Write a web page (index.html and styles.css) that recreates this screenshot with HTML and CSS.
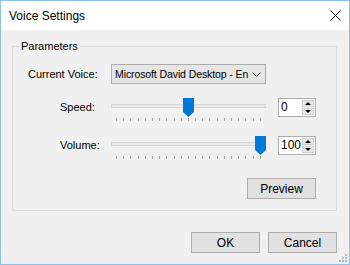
FILE: index.html
```html
<!DOCTYPE html>
<html lang="en">

<head>
    <meta charset="UTF-8" />
    <title>Voice Settings</title>
    <link rel="stylesheet" href="styles.css">
</head>

<body>
    <div class="window">
        <header class="titlebar">
            <span class="title">Voice Settings</span>
            <button class="close-btn" aria-label="Close">
                <svg width="11" height="11" viewBox="0 0 11 11">
                    <path d="M0.5 0.5 L10.5 10.5 M10.5 0.5 L0.5 10.5" stroke="#000" stroke-width="1" fill="none" />
                </svg>
            </button>
        </header>

        <main class="content">
            <fieldset class="group">
                <legend>Parameters</legend>
                <div class="params">
                    <label class="lbl lbl-voice">Current Voice:</label>
                    <div class="combo">
                        <span class="combo-text">Microsoft David Desktop - En</span>
                        <svg class="chevron" width="9" height="5" viewBox="0 0 9 5">
                            <polyline points="0.5,0.5 4.5,4.5 8.5,0.5" stroke="#333" fill="none" />
                        </svg>
                    </div>
                    <span></span>

                    <label class="lbl lbl-slider">Speed:</label>
                    <div class="slider">
                        <div class="track"></div>
                        <svg class="thumb" style="left: 72px" width="11" height="19" viewBox="0 0 11 19">
                            <path d="M0 0 H11 V14 L5.5 19 L0 14 Z" fill="#0078d7" />
                        </svg>
                        <div class="ticks">
                            <i></i><i></i><i></i><i></i><i></i><i></i><i></i><i></i><i></i><i></i><i></i>
                            <i></i><i></i><i></i><i></i><i></i><i></i><i></i><i></i><i></i><i></i>
                        </div>
                    </div>
                    <div class="spin">
                        <span class="spin-value">0</span>
                        <div class="spin-arrows">
                            <span class="arrow up"></span>
                            <span class="arrow down"></span>
                        </div>
                    </div>

                    <label class="lbl lbl-slider">Volume:</label>
                    <div class="slider">
                        <div class="track"></div>
                        <svg class="thumb" style="left: 144px" width="11" height="19" viewBox="0 0 11 19">
                            <path d="M0 0 H11 V14 L5.5 19 L0 14 Z" fill="#0078d7" />
                        </svg>
                        <div class="ticks">
                            <i></i><i></i><i></i><i></i><i></i><i></i><i></i><i></i><i></i><i></i><i></i>
                            <i></i><i></i><i></i><i></i><i></i><i></i><i></i><i></i><i></i><i></i>
                        </div>
                    </div>
                    <div class="spin">
                        <span class="spin-value">100</span>
                        <div class="spin-arrows">
                            <span class="arrow up"></span>
                            <span class="arrow down"></span>
                        </div>
                    </div>

                    <button class="btn preview-btn">Preview</button>
                </div>
            </fieldset>

            <div class="actions">
                <button class="btn">OK</button>
                <button class="btn">Cancel</button>
            </div>
        </main>

        <svg class="grip" width="8" height="8" viewBox="0 0 8 8">
            <rect x="6" y="0" width="2" height="2" fill="#b4b4b4" />
            <rect x="3" y="3" width="2" height="2" fill="#b4b4b4" />
            <rect x="6" y="3" width="2" height="2" fill="#b4b4b4" />
            <rect x="0" y="6" width="2" height="2" fill="#b4b4b4" />
            <rect x="3" y="6" width="2" height="2" fill="#b4b4b4" />
            <rect x="6" y="6" width="2" height="2" fill="#b4b4b4" />
        </svg>
    </div>
</body>

</html>
```

FILE: styles.css
```css
* {
    box-sizing: border-box;
}

body {
    margin: 0;
    font-family: 'Liberation Sans', Arial, sans-serif;
    font-size: 11px;
    color: #000;
}

.window {
    position: relative;
    width: 350px;
    height: 265px;
    border: 1px solid #8ec1ea;
    background: #f0f0f0;
    display: flex;
    flex-direction: column;
}

.titlebar {
    height: 29px;
    background: #fff;
    display: flex;
    align-items: center;
    justify-content: space-between;
    padding-left: 8px;
}

.title {
    font-size: 12px;
}

.close-btn {
    width: 28px;
    height: 29px;
    border: none;
    background: transparent;
    padding: 0;
    display: flex;
    align-items: center;
    justify-content: center;
}

.content {
    flex: 1;
}

.group {
    margin: 9px 0 0 11px;
    width: 325px;
    min-width: 0;
    padding: 11px 0 11px 0;
    border: 1px solid #dcdcdc;
}

.group legend {
    margin-left: 6px;
    padding: 0 2px;
    line-height: 14px;
}

.params {
    display: grid;
    grid-template-columns: 98px 155px 50px;
    row-gap: 14px;
}

.lbl {
    white-space: nowrap;
}

.lbl-voice {
    padding-left: 15px;
    align-self: center;
}

.lbl-slider {
    padding-left: 47px;
    line-height: 18px;
}

.combo {
    height: 20px;
    border: 1px solid #acacac;
    background: #e5e5e5;
    display: flex;
    align-items: center;
    padding: 0 4px 0 3px;
}

.combo-text {
    flex: 1;
    min-width: 0;
    white-space: nowrap;
    font-size: 10.5px;
    letter-spacing: -0.1px;
}

.chevron {
    margin-left: 3px;
    flex: none;
}

.slider {
    position: relative;
    height: 24px;
}

.track {
    margin-top: 6px;
    height: 4px;
    background: #e7eaea;
    border: 1px solid #d6d6d6;
}

.thumb {
    position: absolute;
    top: 0;
}

.ticks {
    display: flex;
    justify-content: space-between;
    margin: 10px 5px 0 5px;
}

.ticks i {
    width: 1px;
    height: 3px;
    background: #a6a6a6;
}

.spin {
    justify-self: end;
    width: 38px;
    height: 19px;
    border: 1px solid #abadb3;
    background: #fff;
    display: flex;
}

.spin-value {
    flex: 1;
    padding-left: 2px;
    line-height: 17px;
    font-size: 12px;
}

.spin-arrows {
    width: 13px;
    display: flex;
    flex-direction: column;
    gap: 1px;
    padding: 1px 1px 1px 0;
}

.arrow {
    flex: 1;
    background: #e8e8e8;
    border: 1px solid #cfcfcf;
    display: flex;
    align-items: center;
    justify-content: center;
}

.arrow::before {
    content: "";
    border-left: 3px solid transparent;
    border-right: 3px solid transparent;
}

.arrow.up::before {
    border-bottom: 3px solid #000;
}

.arrow.down::before {
    border-top: 3px solid #000;
}

.btn {
    width: 69px;
    height: 21px;
    border: 1px solid #adadad;
    background: #e1e1e1;
    font-family: inherit;
    font-size: 12px;
    color: #000;
    padding: 0;
}

.preview-btn {
    grid-column: 2 / 4;
    justify-self: end;
    margin-top: 4px;
}

.actions {
    display: flex;
    justify-content: flex-end;
    gap: 8px;
    margin-top: 21px;
    padding-right: 12px;
}

.grip {
    position: absolute;
    right: 2px;
    bottom: 2px;
}
```
